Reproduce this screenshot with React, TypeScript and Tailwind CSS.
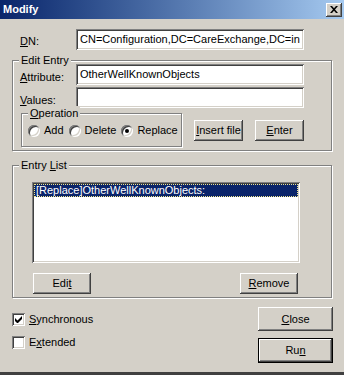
const sunken =
  "shadow-[inset_1px_1px_0_#808080,inset_-1px_-1px_0_#ffffff,inset_2px_2px_0_#404040,inset_-2px_-2px_0_#d4d0c8]";
const raised =
  "shadow-[inset_-1px_-1px_0_#404040,inset_1px_1px_0_#ffffff,inset_-2px_-2px_0_#808080,inset_2px_2px_0_#d4d0c8]";
const etched =
  "border border-[#808080] shadow-[inset_1px_1px_0_#ffffff,1px_1px_0_#ffffff]";

function Btn({
  children,
  className = "",
}: {
  children: React.ReactNode;
  className?: string;
}) {
  return (
    <div
      className={`flex items-center justify-center bg-[#d4d0c8] ${raised} ${className}`}
    >
      {children}
    </div>
  );
}

function Field({ value = "", className = "" }: { value?: string; className?: string }) {
  return (
    <div
      className={`flex items-center bg-white overflow-hidden whitespace-nowrap pl-[4px] pr-[3px] ${sunken} ${className}`}
    >
      {value}
    </div>
  );
}

function Radio({ label, checked = false }: { label: string; checked?: boolean }) {
  return (
    <div className="flex items-center gap-[4px]">
      <div
        className={`w-[12px] h-[12px] rounded-full bg-white flex items-center justify-center ${sunken}`}
      >
        {checked && <div className="w-[4px] h-[4px] rounded-full bg-black" />}
      </div>
      <span>{label}</span>
    </div>
  );
}

function Check({ children, checked = false }: { children: React.ReactNode; checked?: boolean }) {
  return (
    <div className="flex items-center gap-[4px] h-[13px]">
      <div className={`w-[13px] h-[13px] bg-white flex items-center justify-center ${sunken}`}>
        {checked && (
          <svg width="7" height="7" viewBox="0 0 7 7">
            <path d="M0 2v3l2 2h1l4-4V0L2.5 4.5z" fill="#000" />
          </svg>
        )}
      </div>
      <span>{children}</span>
    </div>
  );
}

function Legend({ children, left }: { children: React.ReactNode; left: string }) {
  return (
    <span
      className={`absolute top-[-8px] ${left} px-[2px] bg-[#d4d0c8] leading-[14px]`}
    >
      {children}
    </span>
  );
}

export default function App() {
  return (
    <div className="w-[344px] h-[375px] bg-[#d4d0c8] flex flex-col font-['Liberation_Sans',Arial,sans-serif] text-[11px] leading-[13px] text-black border-b-[3px] border-[#404040] overflow-hidden select-none">
      {/* title bar */}
      <div className="h-[19px] shrink-0 flex items-center justify-between bg-gradient-to-r from-[#0a246a] to-[#a6caf0] pl-[3px] pr-[2px]">
        <span className="font-bold text-white text-[11px]">Modify</span>
        <Btn className="w-[16px] h-[14px]">
          <svg width="8" height="7" viewBox="0 0 8 7">
            <path d="M0 0h2l2 2.2L6 0h2L5 3.5 8 7H6L4 4.8 2 7H0l3-3.5z" fill="#000" />
          </svg>
        </Btn>
      </div>

      <div className="flex flex-col pl-[12px] pt-[10px]">
        {/* DN */}
        <div className="flex h-[21px]">
          <div className="w-[64px] pl-[8px] pt-[6px]">
            <u>D</u>N:
          </div>
          <Field className="w-[228px] h-[21px]" value="CN=Configuration,DC=CareExchange,DC=in" />
        </div>

        {/* Edit Entry */}
        <div className={`relative mt-[10px] w-[320px] h-[91px] ${etched} flex flex-col pt-[3px]`}>
          <Legend left="left-[6px]">Edit Entry</Legend>
          <div className="flex h-[21px]">
            <div className="w-[63px] pl-[7px] pt-[7px]">
              <u>A</u>ttribute:
            </div>
            <Field className="w-[228px] h-[21px]" value="OtherWellKnownObjects" />
          </div>
          <div className="flex h-[21px] mt-[2px]">
            <div className="w-[63px] pl-[7px] pt-[7px]">
              <u>V</u>alues:
            </div>
            <Field className="w-[228px] h-[21px]" />
          </div>
          <div className="flex mt-[5px]">
            <div className={`relative ml-[8px] w-[161px] h-[34px] ${etched} flex items-start gap-[5px] pl-[6px] pt-[10px]`}>
              <Legend left="left-[6px]">
                <u>O</u>peration
              </Legend>
              <Radio label="Add" />
              <Radio label="Delete" />
              <Radio label="Replace" checked />
            </div>
            <Btn className="ml-[12px] mt-[7px] w-[49px] h-[21px]">
              <span>
                <u>I</u>nsert file
              </span>
            </Btn>
            <Btn className="ml-[12px] mt-[7px] w-[49px] h-[21px]">
              <span>
                <u>E</u>nter
              </span>
            </Btn>
          </div>
        </div>

        {/* Entry List */}
        <div className={`relative mt-[14px] w-[320px] h-[133px] ${etched} flex flex-col pt-[16px] pl-[19px]`}>
          <Legend left="left-[6px]">
            Entry <u>L</u>ist
          </Legend>
          <div className={`w-[268px] h-[81px] bg-white p-[2px] ${sunken}`}>
            <div className="h-[13px] bg-[#0a246a] text-white border border-dotted border-[#f0e68c] flex items-center pl-[1px] leading-[11px]">
              [Replace]OtherWellKnownObjects:
            </div>
          </div>
          <div className="flex justify-between w-[265px] ml-[1px] mt-[10px]">
            <Btn className="w-[58px] h-[21px]">
              <span>
                Edi<u>t</u>
              </span>
            </Btn>
            <Btn className="w-[58px] h-[21px]">
              <span>
                <u>R</u>emove
              </span>
            </Btn>
          </div>
        </div>

        {/* bottom */}
        <div className="flex justify-between pr-[11px]">
          <div className="flex flex-col gap-[10px] mt-[15px]">
            <Check checked>
              <u>S</u>ynchronous
            </Check>
            <Check>
              E<u>x</u>tended
            </Check>
          </div>
          <div className="flex flex-col mt-[9px]">
            <Btn className="w-[75px] h-[24px]">
              <span>
                <u>C</u>lose
              </span>
            </Btn>
            <div className="mt-[7px] w-[75px] h-[25px] border border-black">
              <Btn className="w-full h-full">
                <span>
                  Ru<u>n</u>
                </span>
              </Btn>
            </div>
          </div>
        </div>
      </div>
    </div>
  );
}
